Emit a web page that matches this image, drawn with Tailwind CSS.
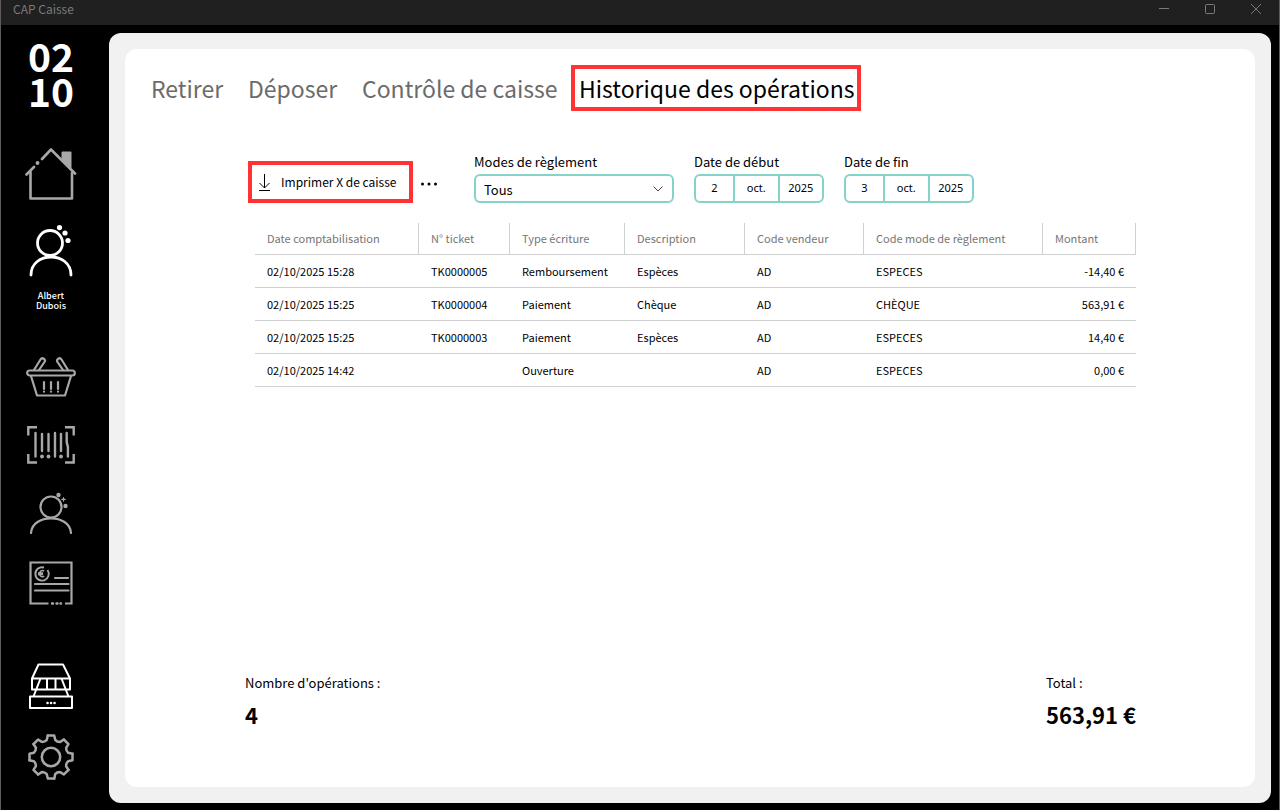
<!DOCTYPE html>
<html lang="fr">
<head>
  <meta charset="UTF-8" />
  <meta name="viewport" content="width=device-width, initial-scale=1.0"/>
  <title>CAP Caisse</title>
  <script src="https://cdn.jsdelivr.net/npm/@tailwindcss/browser@4"></script>
</head>
<body class="min-h-screen flex flex-col bg-black border-x border-[#5c5c5c] text-black font-['Noto_Sans_CJK_SC','Noto_Sans',sans-serif]">
  <!-- Barre de titre -->
  <header class="h-[25px] shrink-0 flex items-start justify-between bg-[#202020] pl-3 text-[#7a7a7a]">
    <span class="text-xs leading-[18px]">CAP Caisse</span>
    <div class="flex">
      <button aria-label="Réduire" class="w-[46px] h-[18px] flex items-center justify-center">
        <svg class="w-[10px] h-[10px]" viewBox="0 0 10 10" stroke="currentColor" fill="none"><path d="M0 4.5h10"/></svg>
      </button>
      <button aria-label="Agrandir" class="w-[46px] h-[18px] flex items-center justify-center">
        <svg class="w-[10px] h-[10px]" viewBox="0 0 10 10" stroke="currentColor" fill="none"><rect x=".5" y=".5" width="9" height="9" rx="1"/></svg>
      </button>
      <button aria-label="Fermer" class="w-[46px] h-[18px] flex items-center justify-center">
        <svg class="w-[10px] h-[10px]" viewBox="0 0 10 10" stroke="currentColor" fill="none"><path d="M0 0l10 10M10 0L0 10"/></svg>
      </button>
    </div>
  </header>

  <div class="flex flex-1">
    <!-- Menu latéral -->
    <nav class="w-[100px] shrink-0 flex flex-col items-center text-[#a8a8a8]">
      <div class="mt-[13px] text-white text-[39px] leading-[35px] font-bold text-center">02<br>10</div>

      <a href="#" aria-label="Accueil" class="mt-[39px]">
        <svg class="w-[52px] h-[54px]" viewBox="0 0 52 54" fill="none" stroke="currentColor" stroke-width="2.6" stroke-linecap="round" stroke-linejoin="round">
          <path d="M5.5 25v26.500h41.500V26"/>
          <path d="M1.500 27.500l7.500-7.500M17 12l9-9.500L50 26.500"/>
          <circle cx="12.500" cy="16" r="1.200" fill="currentColor" stroke-width="1.500"/>
          <path d="M37.500 5.500h8v15l-8-7.500z" fill="currentColor" stroke-width="2"/>
        </svg>
      </a>

      <a href="#" class="mt-6 flex flex-col items-center text-white">
        <svg class="w-11 h-[52px]" viewBox="0 0 44 52" fill="none" stroke="currentColor" stroke-width="2.800" stroke-linecap="round">
          <circle cx="21" cy="18" r="12.500"/>
          <path d="M2 50C2 26 42 26 42 50"/>
          <g fill="currentColor" stroke="none"><circle cx="30.500" cy="2.600" r="2.600"/><circle cx="36" cy="8" r="2.600"/><circle cx="39" cy="15.500" r="2.600"/></g>
        </svg>
        <span class="mt-[14px] text-[9px] leading-[10px] font-medium text-center">Albert<br>Dubois</span>
      </a>

      <a href="#" aria-label="Panier" class="mt-[45px]">
        <svg class="w-[50px] h-[42px]" viewBox="0 0 50 42" fill="none" stroke="currentColor" stroke-width="2.200" stroke-linecap="round" stroke-linejoin="round">
          <rect x="1.200" y="14.500" width="47.600" height="5" rx="2.500"/>
          <path d="M5 20l6 19.500h28L45 20"/>
          <path d="M8 14L14.500 3.500a2.300 2.300 0 0 1 4 2.500L13 14M42 14L35.500 3.500a2.300 2.300 0 0 0-4 2.500L37 14"/>
          <path d="M18 26v7M25 26v7M32 26v7M18 35.600v.1M25 35.600v.1M32 35.600v.1"/>
        </svg>
      </a>

      <a href="#" aria-label="Articles" class="mt-[28px]">
        <svg class="w-12 h-[38px]" viewBox="0 0 48 38" fill="none" stroke="currentColor" stroke-width="2.400">
          <path d="M1.300 9.500V1.300H10M38 1.300h8.700V9.500M1.300 28v8.500H10M38 36.500h8.700V28"/>
          <path stroke-linecap="round" d="M8.500 7v23.500M15 8v17M21.500 8v17M28 7v23.500M34 8v17M39.700 7v9l1.200 5v9.500"/>
          <g fill="currentColor" stroke="none"><circle cx="15" cy="30.500" r="1.900"/><circle cx="21.500" cy="30.500" r="1.900"/><circle cx="34" cy="30.500" r="1.900"/></g>
        </svg>
      </a>

      <a href="#" aria-label="Clients" class="mt-7">
        <svg class="w-11 h-[42px]" viewBox="0 0 44 42" fill="none" stroke="currentColor" stroke-width="2.200" stroke-linecap="round">
          <circle cx="22" cy="15" r="10.500"/>
          <path d="M2 41C3 21.500 41 21.500 42 41"/>
          <g fill="currentColor" stroke="none"><circle cx="29.500" cy="3" r="2.200"/><circle cx="36.500" cy="14" r="2.200"/></g>
          <path d="M34.500 5.500v3.600M32.700 7.300h3.600" stroke-width="1.200"/>
        </svg>
      </a>

      <a href="#" aria-label="Factures" class="mt-[27px]">
        <svg class="w-11 h-11" viewBox="0 0 44 44" fill="none" stroke="currentColor" stroke-width="2.200">
          <path d="M19.500 42.500H1.500V1.500h41V42.500H36"/>
          <path d="M23 42.500h1M27.500 42.500h1M31.500 42.500h.5" stroke-width="2.400" stroke-linecap="round"/>
          <path d="M26 17H39M6 23h33.500M6 29.500h33.500" stroke-linecap="round"/>
          <path d="M15 6.500A6.700 6.700 0 1 0 18.500 9" stroke-width="1.900"/>
          <path d="M15.200 10.200a3 3 0 1 0 0 5M9 11.900h5M9 13.600h5" stroke-width="1.500"/>
        </svg>
      </a>

      <a href="#" aria-label="Caisse" class="mt-[58px] text-white">
        <svg class="w-11 h-[46px]" viewBox="0 0 44 46" fill="none" stroke="currentColor" stroke-width="2" stroke-linejoin="round">
          <path d="M9.500 1.500h24.500L41 15.500H3z"/>
          <path d="M3 15.500v11h38V15.500M11.500 15.500L4.500 33.500M32.500 15.500l7 18M18 15.500v11M26.500 15.500v11"/>
          <path d="M1 33.500h42v11.500H1z"/>
          <path d="M18.500 40h.1M22 40h.1M25.500 40h.1" stroke-width="2.500" stroke-linecap="round"/>
        </svg>
      </a>

      <a href="#" aria-label="Paramètres" class="mt-[25px]">
        <svg class="w-[46px] h-[46px]" viewBox="-23 -23 46 46" fill="none" stroke="currentColor" stroke-width="2.500" stroke-linecap="round" stroke-linejoin="round">
          <circle r="9.200"/>
          <path id="dent" d="M-3.200-21.500H3.200L4.200-17.200Q6.300-14.900 9.200-15.100L12.900-17.500"/>
          <use href="#dent" transform="rotate(45)"/>
          <use href="#dent" transform="rotate(90)"/>
          <use href="#dent" transform="rotate(135)"/>
          <use href="#dent" transform="rotate(180)"/>
          <use href="#dent" transform="rotate(225)"/>
          <use href="#dent" transform="rotate(270)"/>
          <use href="#dent" transform="rotate(315)"/>
        </svg>
      </a>
    </nav>

    <!-- Contenu principal -->
    <div class="flex-1 flex mt-2 mx-2 mb-[7px] p-4 bg-[#f1f1f1] rounded-xl">
      <main class="flex-1 flex flex-col bg-white rounded-xl">
        <nav class="mt-4 ml-[26px] flex items-center text-[23px] leading-[46px] h-[46px] whitespace-nowrap text-[#6b6b6b]">
          <a href="#" class="w-[97px]">Retirer</a>
          <a href="#" class="w-[114px]">Déposer</a>
          <a href="#" class="w-[209px]">Contrôle de caisse</a>
          <a href="#" aria-current="page" class="w-[290px] h-[46px] leading-[38px] pl-1 border-4 border-[#ff3333] text-black">Historique des opérations</a>
        </nav>

        <!-- Filtres -->
        <div class="mt-[40px] ml-[123px] flex items-start">
          <button class="mt-[10px] w-[165px] h-[42px] shrink-0 border-4 border-[#ff3333] flex items-center pl-[6px] gap-[10px] text-xs whitespace-nowrap">
            <svg class="w-[13px] h-[17px]" viewBox="0 0 13 17" fill="none" stroke="currentColor"><path d="M6.500 0v14M1.500 9l5 5 5-5M1 16.500h11"/></svg>
            Imprimer X de caisse
          </button>
          <button aria-label="Plus d'options" class="mt-[10px] ml-[6px] w-5 h-[42px] flex items-center justify-center">
            <svg class="w-[18px] h-1 mt-1" viewBox="0 0 18 4" fill="currentColor"><circle cx="2.500" cy="2" r="1.500"/><circle cx="9" cy="2" r="1.500"/><circle cx="15.500" cy="2" r="1.500"/></svg>
          </button>

          <div class="ml-[35px] w-[200px]">
            <label for="mode" class="block text-[13px] leading-[21px] h-[23px]">Modes de règlement</label>
            <div class="relative">
              <select id="mode" class="appearance-none w-full h-[29px] pl-2 pt-[2px] border-2 border-[#85d3c8] rounded-md bg-white text-[13px]">
                <option>Tous</option>
              </select>
              <svg class="absolute right-[11px] top-3 w-[10px] h-[6px] pointer-events-none" viewBox="0 0 10 6" fill="none" stroke="#444444"><path d="M.5.500L5 5 9.500.500"/></svg>
            </div>
          </div>

          <div role="group" aria-labelledby="debut" class="ml-5 w-[130px]">
            <div id="debut" class="text-[13px] leading-[21px] h-[23px]">Date de début</div>
            <div class="flex h-[29px] border-2 border-[#85d3c8] rounded-md divide-x-2 divide-[#85d3c8] text-[11px] font-['Noto_Sans',sans-serif]">
              <button class="w-[39px]">2</button>
              <button class="flex-1">oct.</button>
              <button class="flex-1">2025</button>
            </div>
          </div>

          <div role="group" aria-labelledby="fin" class="ml-5 w-[130px]">
            <div id="fin" class="text-[13px] leading-[21px] h-[23px]">Date de fin</div>
            <div class="flex h-[29px] border-2 border-[#85d3c8] rounded-md divide-x-2 divide-[#85d3c8] text-[11px] font-['Noto_Sans',sans-serif]">
              <button class="w-[39px]">3</button>
              <button class="flex-1">oct.</button>
              <button class="flex-1">2025</button>
            </div>
          </div>
        </div>

        <!-- Liste des opérations -->
        <div class="mt-5 ml-[130px] mr-[119px]">
          <table class="w-full table-fixed border-separate border-spacing-0 text-[11px] text-left whitespace-nowrap [&_th]:pl-3 [&_th]:font-normal [&_th]:border-r [&_th]:border-b [&_th]:border-[#d0d0d0] [&_td]:pl-3 [&_td]:border-b [&_td]:border-[#d0d0d0]">
            <thead class="text-[#767676]">
              <tr class="h-8">
                <th class="w-[164px]">Date comptabilisation</th>
                <th class="w-[91px]">N° ticket</th>
                <th class="w-[115px]">Type écriture</th>
                <th class="w-[120px]">Description</th>
                <th class="w-[119px]">Code vendeur</th>
                <th class="w-[179px]">Code mode de règlement</th>
                <th>Montant</th>
              </tr>
            </thead>
            <tbody>
              <tr class="h-[33px]">
                <td>02/10/2025 15:28</td><td>TK0000005</td><td>Remboursement</td><td>Espèces</td><td>AD</td><td>ESPECES</td><td class="pr-3 text-right">-14,40 €</td>
              </tr>
              <tr class="h-[33px]">
                <td>02/10/2025 15:25</td><td>TK0000004</td><td>Paiement</td><td>Chèque</td><td>AD</td><td>CHÈQUE</td><td class="pr-3 text-right">563,91 €</td>
              </tr>
              <tr class="h-[33px]">
                <td>02/10/2025 15:25</td><td>TK0000003</td><td>Paiement</td><td>Espèces</td><td>AD</td><td>ESPECES</td><td class="pr-3 text-right">14,40 €</td>
              </tr>
              <tr class="h-[33px]">
                <td>02/10/2025 14:42</td><td></td><td>Ouverture</td><td></td><td>AD</td><td>ESPECES</td><td class="pr-3 text-right">0,00 €</td>
              </tr>
            </tbody>
          </table>
        </div>

        <!-- Totaux -->
        <div class="mt-auto mb-[57px] ml-[120px] mr-[119px] flex justify-between">
          <div>
            <p class="text-[13px] leading-5">Nombre d'opérations :</p>
            <p class="mt-[5px] text-[22px] leading-8 font-bold">4</p>
          </div>
          <div>
            <p class="text-[13px] leading-5">Total :</p>
            <p class="mt-[5px] text-[22px] leading-8 font-bold">563,91 €</p>
          </div>
        </div>
      </main>
    </div>
  </div>
</body>
</html>
